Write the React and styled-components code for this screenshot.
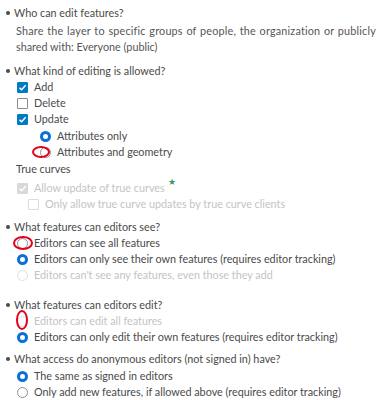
import React from "react";
import styled, { createGlobalStyle } from "styled-components";

const Global = createGlobalStyle`
  html, body { margin: 0; padding: 0; background: #fff; }
  body { font-family: Lato, "Noto Sans", sans-serif; color: #4a4a4a; }
`;

const Page = styled.div`
  padding: 5px 0 0 6px;
  width: 377px;
  box-sizing: border-box;
  font-size: 10.8px;
  line-height: 16px;
  white-space: nowrap;
`;

const Section = styled.div`
  margin-top: ${(p) => p.$gap || 0}px;
`;

const Heading = styled.div`
  display: flex;
  align-items: center;
  gap: 4px;
  color: #4a4a4a;
  &::before {
    content: "";
    width: 4px;
    height: 4px;
    border-radius: 50%;
    background: #4a4a4a;
    flex: none;
  }
`;

const Desc = styled.div`
  padding-left: 10px;
  margin-top: 2px;
  width: 360px;
  color: #555;
`;

const DescLine = styled.div`
  text-align: ${(p) => (p.$justify ? "justify" : "left")};
  text-align-last: ${(p) => (p.$justify ? "justify" : "auto")};
  letter-spacing: ${(p) => (p.$justify ? "0.2px" : "0")};
  white-space: normal;
`;

const Row = styled.div`
  position: relative;
  display: flex;
  align-items: center;
  gap: 6px;
  height: 16px;
  padding-left: ${(p) => p.$indent || 11}px;
  margin-top: ${(p) => p.$mt || 0}px;
  color: ${(p) => (p.$disabled ? "#c4c4c4" : "#4a4a4a")};
`;

const Label = styled.div`
  padding-left: 10px;
  margin-top: 1px;
  color: #4a4a4a;
`;

const Box = styled.span`
  width: 11px;
  height: 11px;
  box-sizing: border-box;
  border-radius: 1px;
  flex: none;
  display: inline-flex;
  align-items: center;
  justify-content: center;
  border: 1px solid ${(p) => (p.$checked ? (p.$disabled ? "#d9d9d9" : "#007ac2") : p.$disabled ? "#dcdcdc" : "#8a8a8a")};
  background: ${(p) => (p.$checked ? (p.$disabled ? "#d9d9d9" : "#007ac2") : "#fff")};
`;

const Radio = styled.span`
  width: 11px;
  height: 11px;
  box-sizing: border-box;
  border-radius: 50%;
  flex: none;
  background: #fff;
  border: ${(p) =>
    p.$checked ? "3px solid #0a6fd6" : p.$disabled ? "1px solid #e0e0e0" : "1px solid #8f8f8f"};
`;

const Ring = styled.span`
  position: absolute;
  left: ${(p) => p.$x}px;
  top: ${(p) => p.$y}px;
  width: ${(p) => p.$w}px;
  height: ${(p) => p.$h}px;
  border: 2.5px solid #e3001b;
  border-radius: 50%;
  box-sizing: border-box;
  pointer-events: none;
`;

const Star = styled.span`
  position: relative;
  top: -6px;
  margin-left: -3px;
  color: #3c9a5f;
  font-size: 9px;
`;

const Check = ({ color = "#fff" }) => (
  <svg width="9" height="9" viewBox="0 0 10 10">
    <path d="M1.6 5.2 L4 7.5 L8.5 2.5" fill="none" stroke={color} strokeWidth="1.7" />
  </svg>
);

const CheckRow = ({ checked, disabled, indent, mt, children, extra }) => (
  <Row $indent={indent} $mt={mt} $disabled={disabled}>
    <Box $checked={checked} $disabled={disabled}>{checked && <Check />}</Box>
    {children}
    {extra}
  </Row>
);

const RadioRow = ({ checked, disabled, indent, mt, children, ring }) => (
  <Row $indent={indent} $mt={mt} $disabled={disabled}>
    <Radio $checked={checked} $disabled={disabled} />
    {children}
    {ring}
  </Row>
);

export default function App() {
  return (
    <Page>
      <Global />
      <Section>
        <Heading>Who can edit features?</Heading>
        <Desc>
          <DescLine $justify>
            Share the layer to specific groups of people, the organization or publicly
          </DescLine>
          <DescLine>shared with: Everyone (public)</DescLine>
        </Desc>
      </Section>
      <Section $gap={8}>
        <Heading>What kind of editing is allowed?</Heading>
        <CheckRow checked>Add</CheckRow>
        <CheckRow>Delete</CheckRow>
        <CheckRow checked>Update</CheckRow>
        <RadioRow checked indent={34} mt={1}>Attributes only</RadioRow>
        <RadioRow indent={34} ring={<Ring $x={26} $y={2} $w={18} $h={12} />}>
          Attributes and geometry
        </RadioRow>
        <Label>True curves</Label>
        <CheckRow checked disabled mt={3} extra={<Star>★</Star>}>
          Allow update of true curves
        </CheckRow>
        <CheckRow disabled indent={22}>
          Only allow true curve updates by true curve clients
        </CheckRow>
      </Section>
      <Section $gap={7}>
        <Heading>What features can editors see?</Heading>
        <RadioRow ring={<Ring $x={7} $y={1} $w={20} $h={14} />}>Editors can see all features</RadioRow>
        <RadioRow checked>Editors can only see their own features (requires editor tracking)</RadioRow>
        <RadioRow disabled>Editors can't see any features, even those they add</RadioRow>
      </Section>
      <Section $gap={14}>
        <Heading>What features can editors edit?</Heading>
        <RadioRow disabled ring={<Ring $x={10} $y={-3} $w={12} $h={20} />}>
          Editors can edit all features
        </RadioRow>
        <RadioRow checked>Editors can only edit their own features (requires editor tracking)</RadioRow>
      </Section>
      <Section $gap={6}>
        <Heading>What access do anonymous editors (not signed in) have?</Heading>
        <RadioRow checked mt={1}>The same as signed in editors</RadioRow>
        <RadioRow>Only add new features, if allowed above (requires editor tracking)</RadioRow>
      </Section>
    </Page>
  );
}
